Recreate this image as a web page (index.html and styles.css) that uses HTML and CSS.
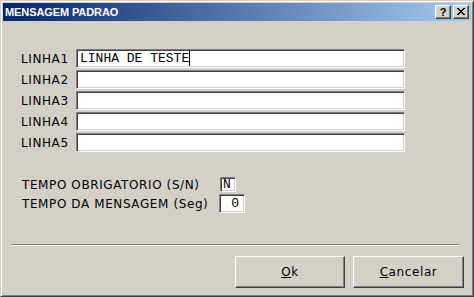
FILE: index.html
```html
<!DOCTYPE html>
<html>
<head>
    <title>MENSAGEM PADRAO</title>
    <link rel="stylesheet" href="styles.css">
</head>
<body>
    <div class="window">
        <div class="titlebar">
            <span class="title">MENSAGEM PADRAO</span>
            <div class="caption-btns">
                <div class="cap-btn help">?</div>
                <div class="cap-btn close">
                    <svg width="8" height="7" viewBox="0 0 8 7"><path d="M0 0h2v1h1v1h2v-1h1v-1h2v1h-1v1h-1v1h-1v1h1v1h1v1h1v1h-2v-1h-1v-1h-2v1h-1v1h-2v-1h1v-1h1v-1h1v-1h-1v-1h-1v-1h-1z" fill="#000"/></svg>
                </div>
            </div>
        </div>
        <div class="content">
            <div class="lines">
                <label>LINHA1</label>
                <div class="field"><span>LINHA DE TESTE</span><span class="caret"></span></div>
                <label>LINHA2</label>
                <div class="field"></div>
                <label>LINHA3</label>
                <div class="field"></div>
                <label>LINHA4</label>
                <div class="field"></div>
                <label>LINHA5</label>
                <div class="field"></div>
            </div>
            <div class="tempo">
                <label>TEMPO OBRIGATORIO (S/N)</label>
                <div class="field small yn">N</div>
                <label>TEMPO DA MENSAGEM (Seg)</label>
                <div class="field small secs">0</div>
            </div>
            <div class="separator"></div>
            <div class="actions">
                <button type="button" class="btn ok"><u>O</u>k</button>
                <button type="button" class="btn cancel"><u>C</u>ancelar</button>
            </div>
        </div>
    </div>
</body>
</html>
```
FILE: styles.css
```css
body {
    margin: 0;
    padding: 0;
    background: #d4d0c8;
    font-family: 'DejaVu Sans', Verdana, sans-serif;
}
.window {
    box-sizing: border-box;
    width: 474px;
    height: 297px;
    padding: 2px;
    background: #d4d0c8;
    border: 1px solid;
    border-color: #d4d0c8 #404040 #404040 #d4d0c8;
    box-shadow: inset 1px 1px #fff, inset -1px -1px #808080;
    display: flex;
    flex-direction: column;
}
.titlebar {
    height: 18px;
    display: flex;
    align-items: center;
    justify-content: space-between;
    background: linear-gradient(to right, #0a246a, #a6caf0);
    padding: 0 2px 0 2px;
}
.title {
    color: #fff;
    font-family: 'Liberation Sans', Arial, sans-serif;
    font-weight: bold;
    font-size: 11px;
    letter-spacing: -0.1px;
}
.caption-btns {
    display: flex;
    gap: 2px;
}
.cap-btn {
    box-sizing: border-box;
    width: 16px;
    height: 14px;
    background: #d4d0c8;
    border: 1px solid;
    border-color: #fff #404040 #404040 #fff;
    box-shadow: inset -1px -1px #808080;
    display: flex;
    align-items: center;
    justify-content: center;
    font-family: 'Liberation Sans', Arial, sans-serif;
    font-weight: bold;
    font-size: 11px;
    line-height: 12px;
    color: #000;
}
.cap-btn.close svg {
    display: block;
    margin: 0 1px 1px 0;
}
.content {
    flex: 1;
    font-size: 12px;
    letter-spacing: 0.6px;
    color: #000;
}
label {
    display: flex;
    align-items: center;
}
.lines {
    display: grid;
    grid-template-columns: 55px 329px;
    grid-auto-rows: 19px;
    row-gap: 2px;
    margin: 28px 0 0 18px;
}
.field {
    box-sizing: border-box;
    background: #fff;
    border: 1px solid;
    border-color: #808080 #fff #fff #808080;
    box-shadow: inset 1px 1px #404040, inset -1px -1px #d4d0c8;
    font-family: 'Liberation Mono', 'Courier New', monospace;
    font-size: 13px;
    letter-spacing: 0;
    line-height: 17px;
    padding-left: 3px;
    display: flex;
    align-items: center;
}
.caret {
    display: inline-block;
    width: 1px;
    height: 15px;
    background: #000;
}
.tempo {
    display: grid;
    grid-template-columns: 197px auto;
    grid-template-rows: 15px 19px;
    row-gap: 2px;
    margin: 25px 0 0 19px;
}
.field.small {
    padding-left: 2px;
}
.yn {
    width: 16px;
    margin-left: 1px;
}
.secs {
    width: 26px;
    justify-content: flex-end;
    padding-right: 5px;
}
.separator {
    margin: 31px 12px 0 8px;
    border-top: 1px solid #808080;
    border-bottom: 1px solid #fff;
    height: 0;
}
.actions {
    display: flex;
    justify-content: flex-end;
    gap: 8px;
    margin: 10px 7px 0 0;
}
.btn {
    box-sizing: border-box;
    height: 32px;
    background: #d4d0c8;
    border: 1px solid;
    border-color: #fff #404040 #404040 #fff;
    box-shadow: inset -1px -1px #808080;
    font-family: 'DejaVu Sans', Verdana, sans-serif;
    font-size: 12px;
    letter-spacing: 0.6px;
    color: #000;
    padding: 0;
}
.btn.ok {
    width: 110px;
}
.btn.cancel {
    width: 111px;
}
```
